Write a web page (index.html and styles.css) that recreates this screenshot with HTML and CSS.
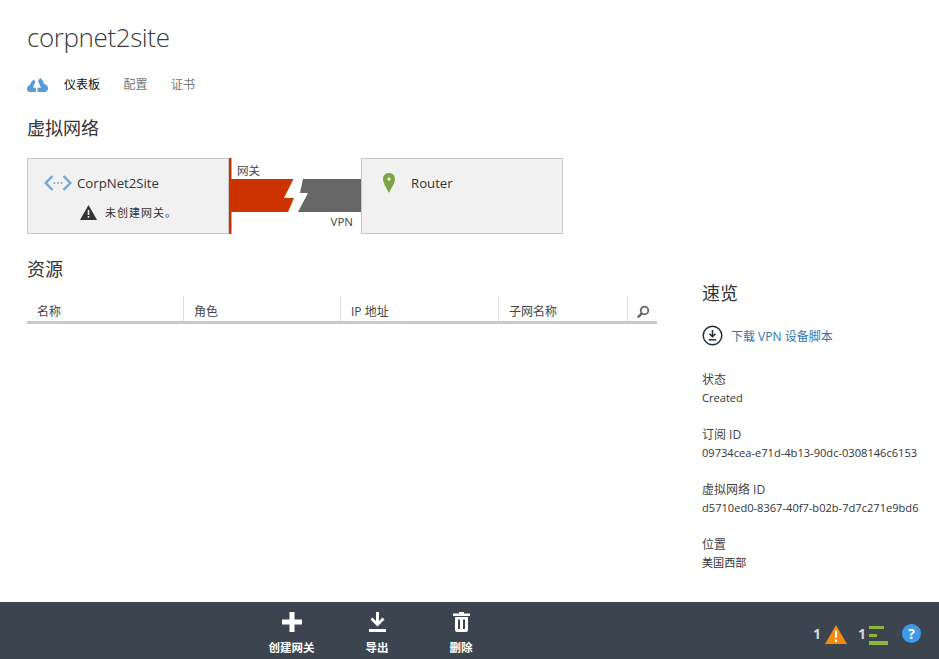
FILE: index.html
```html
<!DOCTYPE html>
<html lang="zh">
<head>
<meta charset="utf-8">
<title>corpnet2site</title>
<link rel="stylesheet" href="styles.css">
</head>
<body>
<div class="page">
  <main class="main">
    <h1 class="title">corpnet2site</h1>
    <nav class="tabs">
      <svg class="tab-icon" width="21" height="14" viewBox="0 0 21 14"><path fill="#5a9bd5" d="M0 11c0-2 1-3.500 3-4 .500-2 1.500-4 4-5.500l1.500 2.500L6 9l3 1.500V14H3c-2 0-3-1-3-3zM10.500 9.500 14 10l-3-7 2-3c2 1 3.500 3 4 6 2.500.500 4 2 4 4.500 0 2-1.500 3.500-3.500 3.500H10.500z"/></svg>
      <a class="tab active">仪表板</a>
      <a class="tab">配置</a>
      <a class="tab">证书</a>
    </nav>
    <h2 class="heading net-heading">虚拟网络</h2>
    <section class="diagram">
      <div class="box">
        <div class="box-row">
          <svg class="net-icon" width="28" height="18" viewBox="0 0 28 18"><path fill="none" stroke="#6fa8d6" stroke-width="2.400" d="M8.500 2 1.700 9l6.800 7M19.500 2l6.800 7-6.800 7"/><g fill="#6fa8d6"><circle cx="10.500" cy="9" r="1"/><circle cx="14" cy="9" r="1"/><circle cx="17.500" cy="9" r="1"/></g></svg>
          <span class="box-name">CorpNet2Site</span>
        </div>
        <div class="box-warn">
          <svg width="17" height="15" viewBox="0 0 17 15"><path fill="#333" d="M8.500 0 17 15H0z"/><path fill="#f0f0f0" d="M7.700 5h1.600v5H7.700zM7.700 11h1.600v1.800H7.700z"/></svg>
          <span>未创建网关。</span>
        </div>
      </div>
      <div class="link">
        <svg width="132" height="76" viewBox="0 0 132 76"><path fill="#cc3300" d="M0 0h2.500v21H64.500L55 40h10L59 54H2.500v22H0z"/><path fill="#666" d="M74 21h58v33H69l10-19H71z"/></svg>
        <span class="link-label gateway">网关</span>
        <span class="link-label vpn">VPN</span>
      </div>
      <div class="box">
        <div class="box-row router-row">
          <svg width="14" height="20" viewBox="0 0 14 20"><path fill="#7ba445" fill-rule="evenodd" d="M7 0c3.500 0 6 2.500 6 6 0 4-3 8-6 14C4 14 1 10 1 6c0-3.500 2.500-6 6-6zm0 4.500a1.600 1.600 0 1 0 0 3.200 1.600 1.600 0 0 0 0-3.200z"/></svg>
          <span class="box-name">Router</span>
        </div>
      </div>
    </section>
    <div class="lower">
      <section class="resources">
        <h2 class="heading res-heading">资源</h2>
        <div class="table-head">
          <div class="col col-name">名称</div>
          <div class="col col-name">角色</div>
          <div class="col col-ip">IP 地址</div>
          <div class="col col-subnet">子网名称</div>
          <div class="col col-search">
            <svg width="14" height="14" viewBox="0 0 14 14"><circle cx="8.500" cy="5.500" r="3.800" fill="none" stroke="#666" stroke-width="1.800"/><path stroke="#666" stroke-width="2.400" d="M5.800 8.300 1.800 12.500"/></svg>
          </div>
        </div>
      </section>
      <aside class="quick">
        <h2 class="heading">速览</h2>
        <a class="download">
          <svg width="21" height="21" viewBox="0 0 21 21"><circle cx="10.500" cy="10.500" r="9.300" fill="none" stroke="#1f2f3f" stroke-width="1.500"/><path fill="none" stroke="#1f2f3f" stroke-width="1.500" d="M10.500 5v6.500M7.500 8.800l3 3 3-3"/><path stroke="#1f2f3f" stroke-width="1.500" d="M6.800 14.800h7.400"/></svg>
          <span>下载 VPN 设备脚本</span>
        </a>
        <dl class="facts">
          <div class="fact"><dt>状态</dt><dd>Created</dd></div>
          <div class="fact"><dt>订阅 ID</dt><dd>09734cea-e71d-4b13-90dc-0308146c6153</dd></div>
          <div class="fact"><dt>虚拟网络 ID</dt><dd>d5710ed0-8367-40f7-b02b-7d7c271e9bd6</dd></div>
          <div class="fact"><dt>位置</dt><dd>美国西部</dd></div>
        </dl>
      </aside>
    </div>
  </main>
  <footer class="bar">
    <div class="actions">
      <button class="action action-create">
        <svg width="20" height="20" viewBox="0 0 20 20"><path fill="#fff" d="M7.500 0h5v7.500H20v5h-7.500V20h-5v-7.500H0v-5h7.500z"/></svg>
        <span>创建网关</span>
      </button>
      <button class="action action-export">
        <svg width="17" height="20" viewBox="0 0 17 20"><path fill="#fff" d="M7 0h3v9l3.500-3.500 2 2-7 7-7-7 2-2L7 9zM0 17h17v3H0z"/></svg>
        <span>导出</span>
      </button>
      <button class="action action-delete">
        <svg width="17" height="20" viewBox="0 0 17 20"><path fill="#fff" fill-rule="evenodd" d="M6 0h5v1.500h6V4H0V1.500h6zM2 5h13v13c0 1-1 2-2 2H4c-1 0-2-1-2-2zm3 2.500V17h2V7.500zm5 0V17h2V7.500z"/></svg>
        <span>删除</span>
      </button>
    </div>
    <div class="status">
      <span class="count">1</span>
      <svg class="warn-icon" width="22" height="20" viewBox="0 0 22 20"><path fill="#f28a0f" d="M11 0 22 19H0z"/><path fill="#fff" d="M9.800 5.500h2.400l-.4 7.500h-1.600zM9.900 14.500h2.200v2.500H9.900z"/></svg>
      <span class="count count-two">1</span>
      <svg class="list-icon" width="19" height="19" viewBox="0 0 19 19"><path fill="#8cb63c" d="M0 0h15v3H0zM0 8h8v3H0zM0 15h19v4H0z"/></svg>
      <svg class="help-icon" width="19" height="19" viewBox="0 0 19 19"><circle cx="9.500" cy="9.500" r="9.500" fill="#3f9bea"/><text x="9.500" y="14.500" text-anchor="middle" class="help-text">?</text></svg>
    </div>
  </footer>
</div>
</body>
</html>
```

FILE: styles.css
```css
* { box-sizing: border-box; }
html, body { margin: 0; padding: 0; }
body {
  background: #fff;
  color: #333;
  font-family: "Open Sans", "Noto Sans CJK SC", sans-serif;
  font-size: 12px;
}
.page {
  width: 939px;
  height: 659px;
  display: flex;
  flex-direction: column;
  overflow: hidden;
}
.main {
  flex: 1;
  padding: 0 0 0 27px;
}
.title {
  margin: 19px 0 0;
  font-size: 26px;
  line-height: 37px;
  font-weight: 300;
  letter-spacing: -0.4px;
  color: #3a3a3a;
}
.tabs {
  display: flex;
  align-items: center;
  height: 20px;
  margin-top: 19px;
}
.tab-icon { margin-right: 16px; }
.tab { color: #777; margin-right: 23.5px; line-height: 20px; }
.tab.active { color: #111; }
.heading {
  margin: 0;
  font-size: 18px;
  line-height: 25px;
  font-weight: 400;
  color: #333;
}
.net-heading { margin-top: 21px; }
.diagram {
  display: flex;
  margin-top: 17px;
  height: 76px;
}
.box {
  width: 202px;
  height: 76px;
  background: #f1f1f1;
  border: 1px solid #c8c8c8;
}
.box-row {
  display: flex;
  align-items: center;
  gap: 5px;
  height: 20px;
  margin: 14px 0 0 16px;
}
.router-row { gap: 15px; margin-left: 20px; }
.box-name { font-size: 13.2px; color: #333; }
.box-warn {
  display: flex;
  align-items: center;
  gap: 8px;
  margin: 10px 0 0 52px;
  height: 18px;
  color: #333;
  font-size: 11px;
  letter-spacing: 1px;
}
.link {
  position: relative;
  width: 132px;
  height: 76px;
}
.link svg { display: block; }
.link-label {
  position: absolute;
  font-size: 11.5px;
  line-height: 14px;
  color: #444;
}
.gateway { left: 8px; top: 6px; }
.vpn { right: 8px; top: 57px; }
.lower { display: flex; }
.resources { width: 630px; margin-top: 23px; }
.res-heading { margin-bottom: 14px; }
.table-head {
  display: flex;
  height: 28px;
  border-bottom: 3px solid #c9c9c9;
}
.col {
  padding: 7px 0 0 10px;
  border-right: 1px solid #ddd;
  color: #444;
  line-height: 18px;
}
.col-name { width: 157px; }
.col-ip { width: 158px; }
.col-subnet { width: 129px; }
.col-search { flex: 1; border-right: 0; padding: 9px 0 0 8px; }
.col-search svg { display: block; }
.quick { margin: 47px 0 0 45px; width: 237px; }
.download {
  display: flex;
  align-items: center;
  gap: 8px;
  margin-top: 19px;
  height: 21px;
  color: #2f75ad;
  font-size: 12px;
}
.facts { margin: 24px 0 0; }
.fact { margin-bottom: 18px; height: 37px; }
.fact dt { line-height: 19px; color: #444; }
.fact dd { margin: 0; line-height: 18px; color: #333; font-size: 11.1px; white-space: nowrap; }
.bar {
  height: 57px;
  background: #3c4450;
  display: flex;
  justify-content: space-between;
  padding-top: 10px;
  color: #fff;
}
.actions { display: flex; margin-left: 267px; }
.action {
  display: flex;
  flex-direction: column;
  align-items: center;
  gap: 7px;
  padding: 0;
  background: none;
  border: 0;
  color: #fff;
  font-family: inherit;
  font-size: 11.5px;
  font-weight: 700;
}
.action-create { width: 49px; }
.action-export { width: 24px; margin-left: 49px; }
.action-delete { width: 24px; margin-left: 60px; }
.status { display: flex; align-items: flex-start; padding: 11px 18px 0 0; }
.count { color: #d5d8dc; font-size: 14px; font-weight: 700; line-height: 22px; }
.warn-icon { margin: 2px 0 0 4px; }
.count-two { margin-left: 11px; }
.list-icon { margin: 3px 0 0 3px; }
.help-icon { margin: 1px 0 0 14px; }
.help-text { fill: #fff; font-family: "Open Sans", sans-serif; font-size: 14px; font-weight: 700; }
```
